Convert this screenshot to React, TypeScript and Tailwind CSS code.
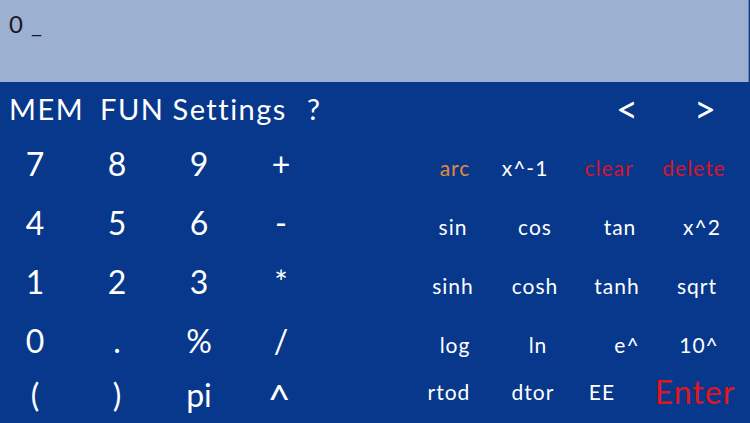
import React from "react";

const font = { fontFamily: "Lato, 'Liberation Sans', sans-serif" };

const leftKeys = [
  ["7", "8", "9", "+"],
  ["4", "5", "6", "-"],
  ["1", "2", "3", "*"],
  ["0", ".", "%", "/"],
  ["(", ")", "pi", "^"],
];

type K = { t: string; c?: string; big?: boolean; o?: string };
const rightKeys: K[][] = [
  [
    { t: "arc", c: "text-[#e38a3d]", o: "ml-[4px]" },
    { t: "x^-1", o: "mr-[20px]" },
    { t: "clear", c: "text-[#d8142b]", o: "mr-[16px]" },
    { t: "delete", c: "text-[#d8142b]", o: "mr-[10px]" },
  ],
  [{ t: "sin" }, { t: "cos" }, { t: "tan", o: "ml-[6px]" }, { t: "x^2", o: "ml-[6px]" }],
  [{ t: "sinh" }, { t: "cosh" }, { t: "tanh" }, { t: "sqrt", o: "mr-[4px]" }],
  [{ t: "log", o: "ml-[4px]" }, { t: "ln", o: "ml-[6px]" }, { t: "e^", o: "ml-[20px]" }, { t: "10^" }],
  [
    { t: "rtod", o: "mr-[8px]" },
    { t: "dtor", o: "mr-[4px]" },
    { t: "EE", o: "mr-[30px]" },
    { t: "Enter", c: "text-[#e0161f]", big: true, o: "mr-[8px]" },
  ],
];

export default function App() {
  return (
    <div className="w-[750px] h-[423px] bg-[#07388b] flex flex-col overflow-hidden" style={font}>
      <div className="h-[82px] w-[749px] bg-[#9cb0d2] border-r border-[#6f83aa] pl-[9px] pt-[9px] text-[24px] text-[#1a1a1a] leading-[30px] tracking-[1px]">
        0 _
      </div>
      <div className="h-[52px] flex items-center text-white text-[29px] leading-none tracking-[1.5px]">
        <span className="ml-[9px]">MEM</span>
        <span className="ml-[16px]">FUN</span>
        <span className="ml-[8px]">Settings</span>
        <span className="ml-[20px]">?</span>
        <span className="ml-auto w-[30px] text-center text-[38px] tracking-normal">&lt;</span>
        <span className="ml-[48px] mr-[30px] w-[30px] text-center text-[38px] tracking-normal">&gt;</span>
      </div>
      <div className="flex flex-1">
        <div className="w-[418px] grid grid-cols-[70px_70px_70px_70px] gap-x-[12px] grid-rows-[59px_59px_59px_59px_50px] content-start text-white text-[32px]">
          {leftKeys.flat().map((k, i) => (
            <div key={i} className="flex items-center justify-center leading-none">
              {k === "^" ? (
                <span className="text-[40px] leading-[40px] pt-[8px] pr-[4px]">^</span>
              ) : (
                k
              )}
            </div>
          ))}
        </div>
        <div className="grid grid-cols-[70px_70px_70px_70px] gap-x-[12px] grid-rows-[59px_59px_59px_59px_35px] content-start pt-[4px] text-white text-[21px] tracking-[1px]">
          {rightKeys.flat().map((k, i) => (
            <div
              key={i}
              className={`flex items-center justify-center leading-none whitespace-nowrap ${k.c ?? ""} ${k.big ? "text-[32px]" : ""}`}
            >
              <span className={k.o ?? ""}>{k.t}</span>
            </div>
          ))}
        </div>
      </div>
    </div>
  );
}
